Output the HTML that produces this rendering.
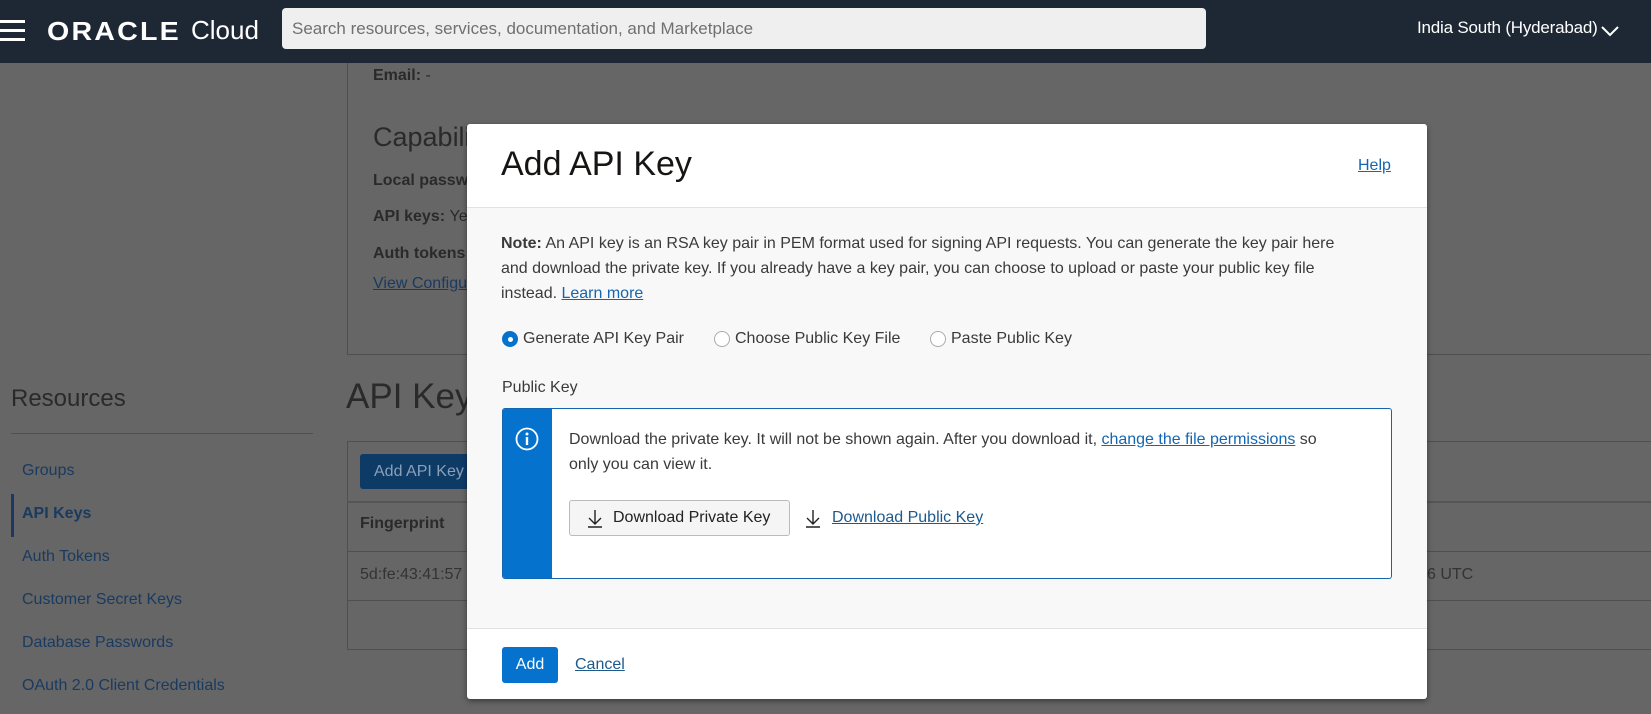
<!DOCTYPE html>
<html><head><meta charset="utf-8"><style>
*{box-sizing:border-box;margin:0;padding:0}
body{width:1651px;height:714px;overflow:hidden;background:#666;font-family:"Liberation Sans",Arial,sans-serif;position:relative;color:#2a2a2a}
.a{position:absolute;white-space:nowrap}
.hdr{position:absolute;left:0;top:0;width:1651px;height:63px;background:#1e2734}
.ln{position:absolute;background:#4f4f4f}
.lk{color:#1a3a60}
.modal{position:absolute;left:467px;top:124px;width:960px;height:575px;background:#fff;border-radius:3px;box-shadow:0 2px 6px rgba(0,0,0,.45);overflow:hidden}
.body{position:absolute;left:0;top:83px;width:960px;height:422px;background:#f8f8f8;border-top:1px solid #e2e2e2;border-bottom:1px solid #e2e2e2}
.t{font-size:16px;color:#3a3a3a}
.blue{color:#1466b0;text-decoration:underline}
.radio{position:absolute;width:16px;height:16px;border-radius:50%;border:1px solid #aaa;background:#fff}
</style></head><body>
<div class="hdr">
  <div class="a" style="left:0;top:20px;width:25px;height:3px;background:#fff"></div>
  <div class="a" style="left:0;top:29px;width:25px;height:3px;background:#fff"></div>
  <div class="a" style="left:0;top:38px;width:25px;height:3px;background:#fff"></div>
  <div class="a" style="left:47px;top:16px;font-size:26px;color:#fff;font-weight:bold;letter-spacing:2px;transform:scaleX(1.1);transform-origin:left">ORACLE</div>
  <div class="a" style="left:191px;top:15px;font-size:26px;color:#fff">Cloud</div>
  <div class="a" style="left:282px;top:8px;width:924px;height:41px;background:#efefef;border-radius:4px;padding:11px 10px;font-size:17px;color:#707070">Search resources, services, documentation, and Marketplace</div>
  <div class="a" style="left:1417px;top:18px;font-size:17px;color:#fff;letter-spacing:-0.2px">India South (Hyderabad)</div>
  <svg class="a" style="left:1601px;top:25px" width="19" height="12"><path d="M1 2l8 8 8-8" stroke="#fff" stroke-width="2" fill="none"/></svg>
</div>
<div class="ln" style="left:347px;top:63px;width:1px;height:292px"></div>
<div class="ln" style="left:347px;top:354px;width:1304px;height:1px"></div>
<div class="a" style="left:373px;top:67px;font-size:16px;font-weight:bold">Email: <span style="font-weight:normal">-</span></div>
<div class="a" style="left:373px;top:122px;font-size:27px">Capabilities</div>
<div class="a" style="left:373px;top:172px;font-size:16px;font-weight:bold">Local password</div>
<div class="a" style="left:373px;top:208px;font-size:16px;font-weight:bold">API keys: <span style="font-weight:normal">Yes</span></div>
<div class="a" style="left:373px;top:245px;font-size:16px;font-weight:bold">Auth tokens</div>
<div class="a lk" style="left:373px;top:275px;font-size:16px;text-decoration:underline">View Configuration</div>
<div class="a" style="left:11px;top:385px;font-size:24px">Resources</div>
<div class="ln" style="left:11px;top:433px;width:302px;height:1px"></div>
<div class="a lk" style="left:22px;top:462px;font-size:16px">Groups</div>
<div class="a" style="left:11px;top:494px;width:3px;height:43px;background:#1d3a5e"></div>
<div class="a lk" style="left:22px;top:505px;font-size:16px;font-weight:bold">API Keys</div>
<div class="a lk" style="left:22px;top:548px;font-size:16px">Auth Tokens</div>
<div class="a lk" style="left:22px;top:591px;font-size:16px">Customer Secret Keys</div>
<div class="a lk" style="left:22px;top:634px;font-size:16px">Database Passwords</div>
<div class="a lk" style="left:22px;top:677px;font-size:16px">OAuth 2.0 Client Credentials</div>
<div class="a" style="left:346px;top:377px;font-size:35px">API Keys</div>
<div class="ln" style="left:347px;top:441px;width:1px;height:208px"></div>
<div class="ln" style="left:347px;top:441px;width:1304px;height:1px"></div>
<div class="a" style="left:360px;top:454px;width:130px;height:35px;background:#0d3b66;border-radius:3px;color:#8aa0b8;font-size:16px;padding:9px 14px">Add API Key</div>
<div class="ln" style="left:347px;top:501px;width:1304px;height:2px;background:#555"></div>
<div class="a" style="left:360px;top:515px;font-size:16px;font-weight:bold">Fingerprint</div>
<div class="ln" style="left:347px;top:551px;width:1304px;height:1px"></div>
<div class="a" style="left:360px;top:566px;font-size:16px;color:#333">5d:fe:43:41:57</div>
<div class="a" style="left:1427px;top:566px;font-size:16px;color:#333">6 UTC</div>
<div class="ln" style="left:347px;top:600px;width:1304px;height:1px"></div>
<div class="ln" style="left:347px;top:649px;width:1304px;height:1px"></div>
<div class="modal">
  <div class="a" style="left:34px;top:21px;font-size:34px;color:#161513">Add API Key</div>
  <div class="a blue" style="left:891px;top:33px;font-size:16px">Help</div>
  <div class="body">
    <div class="a t" style="left:34px;top:23px;line-height:25px;white-space:normal;width:860px"><b>Note:</b> An API key is an RSA key pair in PEM format used for signing API requests. You can generate the key pair here and download the private key. If you already have a key pair, you can choose to upload or paste your public key file instead. <span class="blue">Learn more</span></div>
    <div class="radio" style="left:35px;top:123px;border:1px solid #0572ce;background:#0572ce"><div style="position:absolute;left:5px;top:5px;width:5px;height:5px;border-radius:50%;background:#fff"></div></div>
    <div class="a t" style="left:56px;top:122px">Generate API Key Pair</div>
    <div class="radio" style="left:247px;top:123px"></div>
    <div class="a t" style="left:268px;top:122px">Choose Public Key File</div>
    <div class="radio" style="left:463px;top:123px"></div>
    <div class="a t" style="left:484px;top:122px">Paste Public Key</div>
    <div class="a t" style="left:35px;top:171px">Public Key</div>
    <div class="a" style="left:35px;top:200px;width:890px;height:171px;border:1px solid #1466b0;border-radius:3px;background:#fff;overflow:hidden">
      <div class="a" style="left:0;top:0;width:49px;height:171px;background:#0572ce"></div>
      <svg class="a" style="left:12px;top:18px" width="24" height="24"><circle cx="12" cy="12" r="10.5" stroke="#fff" stroke-width="1.8" fill="none"/><circle cx="12" cy="7" r="1.5" fill="#fff"/><rect x="10.8" y="10" width="2.4" height="8" fill="#fff"/></svg>
      <div class="a t" style="left:66px;top:18px;line-height:25px">Download the private key. It will not be shown again. After you download it, <span class="blue">change the file permissions</span> so<br>only you can view it.</div>
      <div class="a" style="left:66px;top:91px;width:221px;height:36px;border:1px solid #bbb;border-radius:3px;background:#f5f5f5"></div>
      <svg class="a" style="left:83px;top:99px" width="18" height="20"><path d="M9 2v14M3 10l6 6 6-6M2 19h14" stroke="#222" stroke-width="1.4" fill="none"/></svg>
      <div class="a t" style="left:110px;top:100px;color:#222">Download Private Key</div>
      <svg class="a" style="left:301px;top:99px" width="18" height="20"><path d="M9 2v14M3 10l6 6 6-6M2 19h14" stroke="#222" stroke-width="1.4" fill="none"/></svg>
      <div class="a t blue" style="left:329px;top:100px;color:#1d5a8c">Download Public Key</div>
    </div>
  </div>
  <div class="a" style="left:35px;top:523px;width:56px;height:36px;background:#0572ce;border-radius:3px;color:#fff;font-size:16px;padding:9px 0;text-align:center">Add</div>
  <div class="a blue" style="left:108px;top:532px;font-size:16px;color:#1d5a8c">Cancel</div>
</div>
</body></html>
